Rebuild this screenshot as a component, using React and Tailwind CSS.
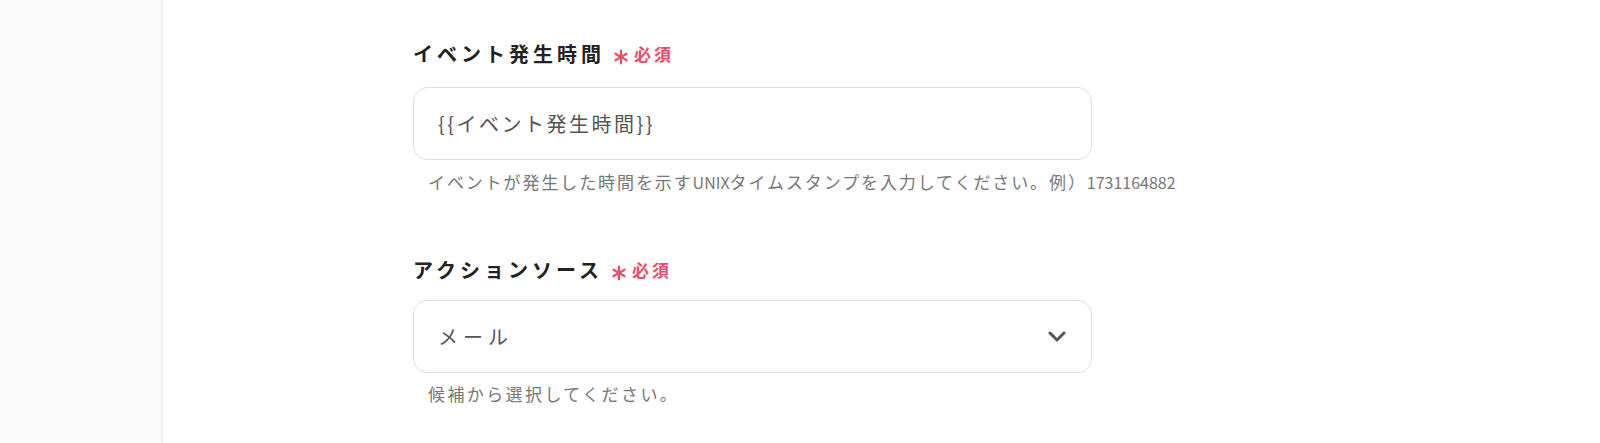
const jp = { fontFamily: '"Noto Sans CJK JP", "Noto Sans", sans-serif' };

function RequiredMark() {
  return (
    <svg width="16" height="16" viewBox="0 0 16 16" className="ml-[8px] mt-[5px]">
      <g stroke="#ef4d68" strokeWidth="2.2" strokeLinecap="round">
        <line x1="8" y1="1.5" x2="8" y2="14.5" />
        <line x1="2.4" y1="4.75" x2="13.6" y2="11.25" />
        <line x1="2.4" y1="11.25" x2="13.6" y2="4.75" />
      </g>
    </svg>
  );
}

function FieldLabel({ children }) {
  return (
    <div className="flex items-center h-[28px]">
      <span className="text-[20px] font-bold text-[#222] tracking-[4px] leading-[28px]">
        {children}
      </span>
      <RequiredMark />
      <span className="ml-[5px] text-[17px] font-bold text-[#ef4d68] tracking-[3px] leading-[28px]">
        必須
      </span>
    </div>
  );
}

function HelpText({ children, className }) {
  return (
    <p className={"text-[17px] text-[#777] leading-[24px] whitespace-nowrap pl-[15px] " + className}>
      {children}
    </p>
  );
}

export default function App() {
  return (
    <div className="flex w-[1600px] h-[443px] bg-white overflow-hidden" style={jp}>
      <aside className="w-[163px] shrink-0 bg-[#fafafa] border-r-2 border-[#f1f1f1]" />
      <main className="flex-1 pl-[250px] pt-[40px]">
        <div className="w-[679px]">
          <FieldLabel>イベント発生時間</FieldLabel>
          <div className="mt-[19px] h-[73px] rounded-[14px] border border-[#dde1e6] flex items-center px-[24px]">
            <span className="text-[20px] text-[#555] tracking-[2.5px]">{"{{イベント発生時間}}"}</span>
          </div>
          <HelpText className="mt-[10px] tracking-[1.9px]">
            イベントが発生した時間を示す<span className="text-[16px] tracking-normal">UNIX</span>
            タイムスタンプを入力してください。例）
            <span className="text-[16px] tracking-normal">1731164882</span>
          </HelpText>

          <div className="mt-[62px]">
            <FieldLabel>アクションソース</FieldLabel>
          </div>
          <div className="mt-[16px] h-[73px] rounded-[14px] border border-[#dde1e6] flex items-center justify-between pl-[24px] pr-[24px]">
            <span className="text-[20px] text-[#555] tracking-[5px]">メール</span>
            <svg width="20" height="12" viewBox="0 0 20 12" fill="none">
              <polyline points="3,2 10,9 17,2" stroke="#555" strokeWidth="3" strokeLinecap="round" strokeLinejoin="round" />
            </svg>
          </div>
          <HelpText className="mt-[9px] tracking-[2.4px]">候補から選択してください。</HelpText>
        </div>
      </main>
    </div>
  );
}
